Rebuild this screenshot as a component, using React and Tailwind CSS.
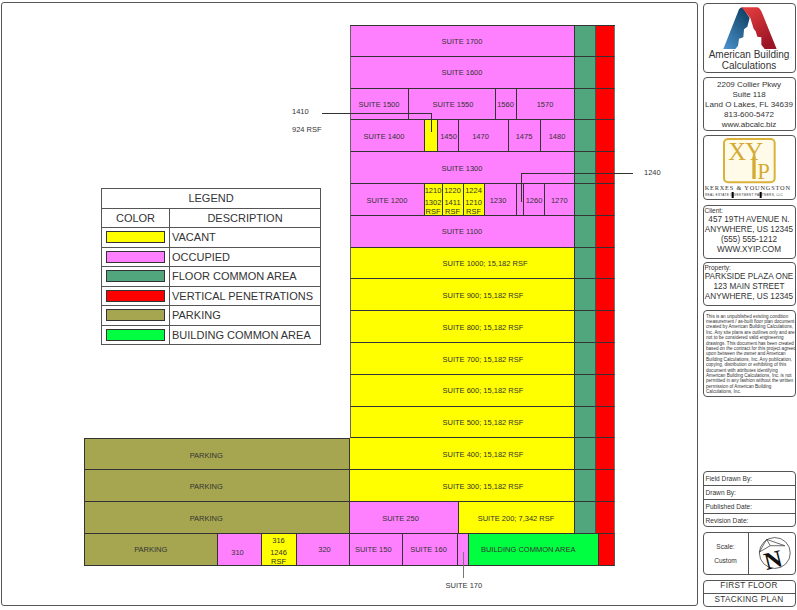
const PINK = 'bg-[#ff80ff]';
const YELLOW = 'bg-[#ffff00]';
const PARK = 'bg-[#a6a650]';

const Cell = ({ className = '', pad = 'pt-[1.5px]', children }) => (
  <div className={`flex shrink-0 items-center justify-center whitespace-nowrap border-r border-b border-[#333] text-center leading-[9px] ${pad} ${className}`}>
    {children}
  </div>
);

const Common = () => (
  <>
    <Cell className="w-[21px] bg-[#52a67e] border-r-[#3c5c4c]" />
    <Cell className="w-[19px] bg-[#ff0000] border-r-[#777]" />
  </>
);

// tall yellow cells with three text lines
const Stacked = ({ className, lines }) => (
  <Cell pad="pt-[2px]" className={`${YELLOW} flex-col justify-start ${className}`}>
    <span>{lines[0]}</span>
    <span className="mt-[3.5px]">{lines[1]}</span>
    <span>{lines[2]}</span>
  </Cell>
);

const Row = ({ children, first }) => (
  <div className={`flex h-[31.8px] ${first ? 'border-t border-[#333]' : ''}`}>{children}</div>
);

const Full = ({ label, bg, first }) => (
  <Row first={first}>
    <Cell className={`w-[225px] border-l border-l-[#666] ${bg}`}>{label}</Cell>
    <Common />
  </Row>
);

const Vacant = ({ label }) => (
  <Row>
    <Cell className={`w-[225px] justify-start border-l border-l-[#666] pl-[92px] ${YELLOW}`}>{label}</Cell>
    <Common />
  </Row>
);

const legendRows = [
  { label: 'VACANT', color: 'bg-[#ffff00]' },
  { label: 'OCCUPIED', color: 'bg-[#ff80ff]' },
  { label: 'FLOOR COMMON AREA', color: 'bg-[#52a67e]' },
  { label: 'VERTICAL PENETRATIONS', color: 'bg-[#ff0000]' },
  { label: 'PARKING', color: 'bg-[#a6a650]' },
  { label: 'BUILDING COMMON AREA', color: 'bg-[#00ff40]' },
];

const Legend = () => (
  <div className="ml-[17px] mt-[163px] w-[220px] border-t border-l border-[#555] text-[11px] text-[#333]">
    <div className="flex h-[19.5px] items-center justify-center border-r border-b border-[#555]">LEGEND</div>
    <div className="flex h-[19.5px]">
      <div className="flex w-[68px] items-center justify-center border-r border-b border-[#555]">COLOR</div>
      <div className="flex flex-1 items-center justify-center border-r border-b border-[#555]">DESCRIPTION</div>
    </div>
    {legendRows.map((r) => (
      <div key={r.label} className="flex h-[19.5px]">
        <div className="flex w-[68px] items-center justify-center border-r border-b border-[#555] pr-[1px]">
          <div className={`h-[12px] w-[59px] border border-[#333] ${r.color}`} />
        </div>
        <div className="flex flex-1 items-center whitespace-nowrap border-r border-b border-[#555] pl-[2px]">{r.label}</div>
      </div>
    ))}
  </div>
);

const Stack = () => (
  <div className="w-[265.5px] text-[7.5px] text-[#333]">
    <Full first label="SUITE 1700" bg={PINK} />
    <Full label="SUITE 1600" bg={PINK} />
    <Row>
      <Cell className={`w-[59px] border-l border-l-[#666] ${PINK}`}>SUITE 1500</Cell>
      <Cell className={`w-[87px] pl-[3px] ${PINK}`}>SUITE 1550</Cell>
      <Cell className={`w-[21px] ${PINK}`}>1560</Cell>
      <Cell className={`w-[58px] ${PINK}`}>1570</Cell>
      <Common />
    </Row>
    <Row>
      <Cell className={`w-[75px] border-l border-l-[#666] pr-[6px] ${PINK}`}>SUITE 1400</Cell>
      <Cell className={`w-[13px] ${YELLOW}`} />
      <Cell className={`w-[21px] pl-[2px] ${PINK}`}>1450</Cell>
      <Cell className={`w-[50px] pr-[5px] ${PINK}`}>1470</Cell>
      <Cell className={`w-[32px] ${PINK}`}>1475</Cell>
      <Cell className={`w-[34px] ${PINK}`}>1480</Cell>
      <Common />
    </Row>
    <Full label="SUITE 1300" bg={PINK} />
    <Row>
      <Cell className={`w-[75px] border-l border-l-[#666] ${PINK}`}>SUITE 1200</Cell>
      <Stacked className="w-[18px]" lines={['1210', '1302', 'RSF']} />
      <Stacked className="w-[21px]" lines={['1220', '1411', 'RSF']} />
      <Stacked className="w-[21px]" lines={['1224', '1210', 'RSF']} />
      <Cell className={`w-[32px] pr-[4px] ${PINK}`}>1230</Cell>
      <Cell className={`w-[7.5px] ${PINK}`} />
      <Cell className={`w-[21px] ${PINK}`}>1260</Cell>
      <Cell className={`w-[29.5px] ${PINK}`}>1270</Cell>
      <Common />
    </Row>
    <Full label="SUITE 1100" bg={PINK} />
    <Vacant label="SUITE 1000; 15,182 RSF" />
    <Vacant label="SUITE 900; 15,182 RSF" />
    <Vacant label="SUITE 800; 15,182 RSF" />
    <Vacant label="SUITE 700; 15,182 RSF" />
    <Vacant label="SUITE 600; 15,182 RSF" />
    <Vacant label="SUITE 500; 15,182 RSF" />
  </div>
);

const BottomRows = () => (
  <div className="text-[7.5px] text-[#333]">
    <Row>
      <Cell className={`w-[265.5px] border-l border-t border-[#333] pr-[21px] ${PARK}`}>PARKING</Cell>
      <Cell className={`w-[225px] justify-start pl-[93px] ${YELLOW}`}>SUITE 400; 15,182 RSF</Cell>
      <Common />
    </Row>
    <Row>
      <Cell className={`w-[265.5px] border-l border-[#333] pr-[21px] ${PARK}`}>PARKING</Cell>
      <Cell className={`w-[225px] justify-start pl-[93px] ${YELLOW}`}>SUITE 300; 15,182 RSF</Cell>
      <Common />
    </Row>
    <Row>
      <Cell className={`w-[265.5px] border-l border-[#333] pr-[21px] ${PARK}`}>PARKING</Cell>
      <Cell className={`w-[109px] pr-[6px] ${PINK}`}>SUITE 250</Cell>
      <Cell className={`w-[116px] ${YELLOW}`}>SUITE 200; 7,342 RSF</Cell>
      <Common />
    </Row>
    <Row>
      <Cell className={`w-[133.5px] border-l border-[#333] ${PARK}`}>PARKING</Cell>
      <Cell pad="pt-[6px]" className={`w-[44px] pr-[3px] ${PINK}`}>310</Cell>
      <Stacked className="w-[35px]" lines={['316', '1246', 'RSF']} />
      <Cell className={`w-[53px] pl-[4px] ${PINK}`}>320</Cell>
      <Cell className={`w-[53.5px] pr-[5px] ${PINK}`}>SUITE 150</Cell>
      <Cell className={`w-[55px] pr-[3px] ${PINK}`}>SUITE 160</Cell>
      <Cell className={`w-[11px] ${PINK}`} />
      <Cell className="w-[129.5px] bg-[#00ff40] pr-[10px]">BUILDING COMMON AREA</Cell>
      <Cell className="w-[16px] bg-[#ff0000] border-r-[#555]" />
    </Row>
  </div>
);

const AbcLogo = () => (
  <svg viewBox="0 0 279 150" className="h-[50px] w-[93px]">
    <defs>
      <linearGradient id="blueGrad" x1="0" y1="1" x2="0.7" y2="0">
        <stop offset="0" stopColor="#4d94cf" />
        <stop offset="1" stopColor="#114468" />
      </linearGradient>
      <linearGradient id="redGrad" x1="0" y1="0" x2="0.6" y2="1">
        <stop offset="0" stopColor="#e8403f" />
        <stop offset="1" stopColor="#9a1426" />
      </linearGradient>
    </defs>
    <path d="M58 135 L105 16 Q109 10 116 10 L137 42 L130 68 L120 76 L118 100 L105 104 L102 125 L94 135 Z" fill="url(#blueGrad)" />
    <path d="M113 10 L160 10 Q168 12 173 24 L218 135 L182 135 L172 122 L172 100 L160 98 L155 82 L149 74 L139 42 Z" fill="url(#redGrad)" />
  </svg>
);

const XyLogo = () => (
  <svg viewBox="0 0 279 195" className="h-[65px] w-[93px]">
    <rect x="60" y="9" width="152" height="130" rx="12" fill="#fffbe8" stroke="#d9b13b" strokeWidth="6" />
    <text x="73" y="72" fontFamily="'Liberation Serif', serif" fontSize="74" fill="#d4aa35">X</text>
    <text x="124" y="72" fontFamily="'Liberation Serif', serif" fontSize="74" fill="#d4aa35">Y</text>
    <rect x="145" y="62" width="10" height="67" fill="#d4aa35" />
    <text x="160" y="129" fontFamily="'Liberation Serif', serif" fontSize="68" fill="#d4aa35">P</text>
    <text x="2" y="163" fontFamily="'Liberation Serif', serif" fontSize="19" letterSpacing="2.4" fill="#333">KERXES &amp; YOUNGSTON</text>
    <text x="3" y="179" fontFamily="'Liberation Sans', sans-serif" fontSize="9.5" letterSpacing="0.9" fill="#333">REAL ESTATE INVESTMENT PARTNERS, LLC</text>
    <rect x="83" y="168" width="6" height="18" fill="#000" />
    <rect x="167" y="168" width="6" height="18" fill="#000" />
  </svg>
);

const NorthArrow = () => (
  <svg viewBox="0 0 46 44" className="ml-[2px] h-[40px] w-[42px]">
    <circle cx="25" cy="22" r="17" fill="none" stroke="#333" strokeWidth="0.8" />
    <path d="M8 21 L16 7 L36 14 L20 14 L8 21 M16 7 L20 14" fill="none" stroke="#333" strokeWidth="0.8" />
    <text x="13" y="38" fontFamily="'Liberation Serif', serif" fontWeight="700" fontSize="27" fill="#111" transform="rotate(-14 25 28)">N</text>
  </svg>
);

const Panel = ({ className = '', children }) => (
  <div className={`w-[93px] shrink-0 overflow-hidden rounded-[4px] border border-[#555] text-center text-[#333] ${className}`}>
    {children}
  </div>
);

const TitleRow = ({ children, last }) => (
  <div className={`flex h-[14px] items-center pl-[2px] text-[6.6px] ${last ? '' : 'border-b border-[#555]'}`}>{children}</div>
);

const disclaimer = [
  'This is an unpublished existing condition',
  'measurement / as-built floor plan document',
  'created by American Building Calculations,',
  'Inc. Any site plans are outlines only and are',
  'not to be considered valid engineering',
  'drawings. This document has been created',
  'based on the contract for this project agreed',
  'upon between the owner and American',
  'Building Calculations, Inc. Any publication,',
  'copying, distribution or exhibiting of this',
  'document with attributes identifying',
  'American Building Calculations, Inc. is not',
  'permitted in any fashion without the written',
  'permission of American Building',
  'Calculations, Inc.',
];

const Sidebar = () => (
  <div className="ml-[4.5px] mt-[2.5px] flex flex-col">
    <Panel className="h-[70px]">
      <AbcLogo />
      <div className="-mt-[5px] text-[10px] leading-[11px]">
        American Building
        <br />
        Calculations
      </div>
    </Panel>
    <Panel className="mt-[4.5px] h-[53.5px] pt-[1.5px] text-[8px] leading-[10px]">
      <div>2209 Collier Pkwy</div>
      <div>Suite 118</div>
      <div className="whitespace-nowrap">Land O Lakes, FL 34639</div>
      <div>813-600-5472</div>
      <div>www.abcalc.biz</div>
    </Panel>
    <Panel className="mt-[4.5px] h-[65px]">
      <XyLogo />
    </Panel>
    <Panel className="mt-[4.5px] h-[54px] text-[8.2px] leading-[10px]">
      <div className="pl-[1px] text-left text-[6.5px] leading-[9px]">Client:</div>
      <div className="whitespace-nowrap">457 19TH AVENUE N.</div>
      <div className="whitespace-nowrap">ANYWHERE, US 12345</div>
      <div>(555) 555-1212</div>
      <div>WWW.XYIP.COM</div>
    </Panel>
    <Panel className="mt-[3.5px] h-[43.5px] text-[8.2px] leading-[10px]">
      <div className="pl-[1px] text-left text-[6.5px] leading-[9px]">Property:</div>
      <div className="whitespace-nowrap">PARKSIDE PLAZA ONE</div>
      <div>123 MAIN STREET</div>
      <div className="whitespace-nowrap">ANYWHERE, US 12345</div>
    </Panel>
    <Panel className="mt-[4px] h-[87px] pl-[2.5px] pt-[3px] text-left text-[4.6px] leading-[5.4px] text-[#222]">
      {disclaimer.map((line) => (
        <div key={line} className="whitespace-nowrap">{line}</div>
      ))}
    </Panel>
    <Panel className="mt-[74.5px] h-[56px]">
      <TitleRow>Field Drawn By:</TitleRow>
      <TitleRow>Drawn By:</TitleRow>
      <TitleRow>Published Date:</TitleRow>
      <TitleRow last>Revision Date:</TitleRow>
    </Panel>
    <Panel className="mt-[5px] flex h-[42.5px]">
      <div className="flex w-[45px] flex-col items-center justify-center gap-[6px] border-r border-[#555] pt-[2px] text-[6.6px] leading-[8px]">
        <span>Scale:</span>
        <span>Custom</span>
      </div>
      <div className="flex flex-1 items-center justify-center">
        <NorthArrow />
      </div>
    </Panel>
    <Panel className="mt-[5px] h-[27.5px] text-[8.2px] tracking-[0.3px]">
      <div className="flex h-[13px] items-center justify-center border-b border-[#555]">FIRST FLOOR</div>
      <div className="flex h-[13px] items-center justify-center">STACKING PLAN</div>
    </Panel>
  </div>
);

export default function App() {
  return (
    <div className="relative flex h-[610px] w-[797px] overflow-hidden bg-white font-['Liberation_Sans',Arial,sans-serif]">
      <div className="ml-[1px] mt-[2px] h-[604px] w-[697px] rounded-[3px] border border-[#555] pl-[82px] pt-[22px]">
        <div className="flex">
          <div className="w-[265.5px]">
            <Legend />
          </div>
          <Stack />
        </div>
        <BottomRows />
      </div>
      <Sidebar />

      {/* leader lines and their labels */}
      <div className="absolute left-[322px] top-[113px] h-[19px] w-[110px] border-t border-r border-[#333]" />
      <span className="absolute left-[292px] top-[105.5px] text-[7.5px] text-[#333]">1410</span>
      <span className="absolute left-[292px] top-[123.5px] text-[7.5px] text-[#333]">924 RSF</span>
      <div className="absolute left-[520.5px] top-[172.5px] h-[29px] w-[112px] border-t border-l border-[#333]" />
      <span className="absolute left-[644px] top-[167px] text-[7.5px] text-[#333]">1240</span>
      <div className="absolute left-[462.5px] top-[552px] h-[26px] w-px bg-[#777]" />
      <span className="absolute left-[445.5px] top-[580px] text-[7.5px] text-[#333]">SUITE 170</span>
    </div>
  );
}
